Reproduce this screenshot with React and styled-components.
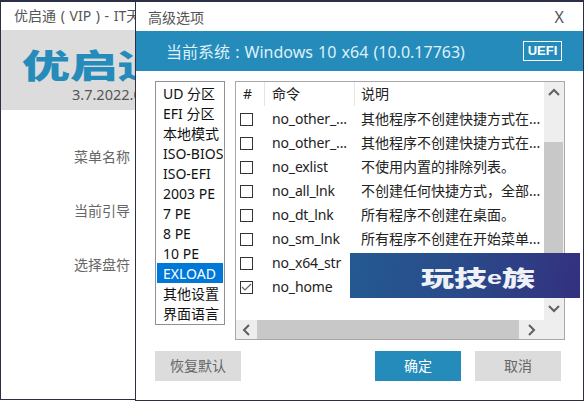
import React from 'react';
import styled, { createGlobalStyle } from 'styled-components';

const GlobalStyle = createGlobalStyle`
	html, body {
		margin: 0;
		padding: 0;
		background: #fff;
	}
	body {
		font-family: "Noto Sans", "Noto Sans CJK SC", sans-serif;
	}
`;

const Desktop = styled.div`
	position: relative;
	width: 585px;
	height: 401px;
	overflow: hidden;
`;

const MainWindow = styled.div`
	box-sizing: border-box;
	width: 136px;
	height: 400px;
	background: #fff;
	border: 1px solid #2b3046;
	border-top-width: 2px;
	display: flex;
	flex-direction: column;
	overflow: hidden;
`;

const MainTitle = styled.div`
	height: 28px;
	padding-left: 13px;
	font-size: 14px;
	line-height: 28px;
	word-spacing: 1px;
	color: #555;
	white-space: nowrap;
`;

const Banner = styled.div`
	height: 80px;
	background: #dcdcdc;
	padding-left: 21px;
	display: flex;
	flex-direction: column;
`;

const Logo = styled.div`
	height: 46px;
	margin-top: 11px;
	font-family: "Noto Sans CJK SC", sans-serif;
	font-size: 33px;
	font-weight: 900;
	line-height: 46px;
	color: #248bbb;
	white-space: nowrap;
	transform: scaleX(1.45);
	transform-origin: left center;
`;

const Version = styled.div`
	margin-left: 50px;
	margin-top: -3px;
	font-size: 14.5px;
	line-height: 20px;
	color: #555;
	white-space: nowrap;
`;

const FieldList = styled.div`
	display: flex;
	flex-direction: column;
	gap: 34px;
	padding: 37px 0 0 73px;
`;

const FieldLabel = styled.div`
	font-size: 14px;
	line-height: 20px;
	color: #666;
	white-space: nowrap;
`;

const Dialog = styled.div`
	position: absolute;
	left: 135px;
	top: 0;
	box-sizing: border-box;
	width: 449px;
	height: 401px;
	background: #fff;
	border: 1px solid #2b3046;
	border-top-width: 2px;
	display: flex;
	flex-direction: column;
`;

const DialogTitle = styled.div`
	height: 29px;
	padding: 0 19px 0 12px;
	display: flex;
	align-items: center;
	justify-content: space-between;
	font-size: 14px;
	color: #555;
`;

const CloseMark = styled.span`
	font-size: 16px;
	color: #555;
`;

const SystemBar = styled.div`
	height: 40px;
	background: #248bbb;
	padding: 0 21px 0 30px;
	display: flex;
	align-items: center;
	justify-content: space-between;
	font-size: 16px;
	word-spacing: 1px;
	color: #dff0f8;
`;

const UefiBadge = styled.div`
	box-sizing: border-box;
	width: 39px;
	height: 20px;
	border: 1px solid #fff;
	font-family: "Liberation Sans", sans-serif;
	font-size: 13px;
	font-weight: 700;
	line-height: 18px;
	text-align: center;
	color: #fff;
`;

const DialogBody = styled.div`
	display: flex;
	align-items: flex-start;
	gap: 10px;
	padding: 10px 0 0 19px;
`;

const CategoryList = styled.div`
	box-sizing: border-box;
	width: 70px;
	height: 244px;
	padding: 1px;
	border: 1px solid #8d929a;
	display: flex;
	flex-direction: column;
`;

const CategoryItem = styled.div`
	height: 20px;
	padding-left: 6px;
	font-size: 14px;
	line-height: 21px;
	white-space: nowrap;
	overflow: hidden;
	background: ${props => props.selected ? '#0078d7' : 'transparent'};
	color: ${props => props.selected ? '#fff' : '#111'};
`;

const TablePanel = styled.div`
	position: relative;
	box-sizing: border-box;
	width: 330px;
	height: 259px;
	border: 1px solid #a8a8a8;
	display: grid;
	grid-template-columns: 1fr 20px;
	grid-template-rows: 1fr 19px;
`;

const TableContent = styled.div`
	display: flex;
	flex-direction: column;
	overflow: hidden;
`;

const HeaderRow = styled.div`
	height: 24px;
	display: grid;
	grid-template-columns: 29px 90px 1fr;
	font-size: 14px;
	line-height: 24px;
	color: #222;
`;

const HeaderCell = styled.div`
	padding-left: ${props => props.$pad}px;
	height: 24px;
	border-right: ${props => props.$last ? 'none' : '1px solid #e4e4e4'};
`;

const Row = styled.div`
	height: 24px;
	display: grid;
	grid-template-columns: 29px 90px 1fr;
	align-items: center;
	font-size: 14px;
	line-height: 26px;
	color: #222;
	white-space: nowrap;
`;

const CheckCell = styled.div`
	padding-left: 4px;
	display: flex;
`;

const Box = styled.div`
	box-sizing: border-box;
	width: 13px;
	height: 13px;
	border: 1px solid #333;
	display: flex;
	align-items: center;
	justify-content: center;
`;

const CommandCell = styled.div`
	padding-left: 7px;
	letter-spacing: -0.15px;
`;

const NoteCell = styled.div`
	padding-left: 6px;
`;

const VerticalBar = styled.div`
	background: #eee;
	display: flex;
	flex-direction: column;
	align-items: flex-start;
`;

const HorizontalBar = styled.div`
	grid-column: 1 / 3;
	background: #eee;
	display: flex;
	align-items: stretch;
`;

const ArrowButton = styled.div`
	width: ${props => props.$w || 20}px;
	height: ${props => props.$h || 19}px;
	margin-top: ${props => props.$pushed ? 'auto' : '0'};
	flex-shrink: 0;
	display: flex;
	align-items: center;
	justify-content: center;
`;

const ThumbVertical = styled.div`
	width: 19px;
	height: 130px;
	margin-top: 38px;
	background: #c8c8c8;
`;

const ThumbHorizontal = styled.div`
	width: 262px;
	background: #c8c8c8;
`;

const FooterRow = styled.div`
	display: flex;
	padding: 11px 0 0 19px;
	align-items: center;
`;

const ActionButton = styled.div`
	width: 86px;
	height: 30px;
	margin-left: ${props => props.$gap || 0}px;
	font-size: 14px;
	line-height: 30px;
	text-align: center;
	background: ${props => props.primary ? '#248bbb' : '#dcdcdc'};
	color: ${props => props.primary ? '#fff' : '#666'};
`;

const Watermark = styled.div`
	position: absolute;
	left: 350px;
	top: 253px;
	width: 230px;
	height: 45px;
	background: linear-gradient(100deg, #245a91 0%, #2a4c8a 45%, #33307f 100%);
	display: flex;
	align-items: center;
	justify-content: flex-end;
	padding-right: 45px;
	box-sizing: border-box;
`;

const WatermarkText = styled.div`
	display: flex;
	align-items: center;
	font-family: "Noto Sans CJK SC", sans-serif;
	font-size: 22px;
	font-weight: 900;
	line-height: 30px;
	color: #eef2f8;
	transform: scaleX(1.5);
	transform-origin: right center;
`;

const WatermarkE = styled.span`
	font-family: "Liberation Sans", sans-serif;
	font-size: 18px;
	line-height: 30px;
	margin-top: 4px;
`;

const categories = ['UD 分区', 'EFI 分区', '本地模式', 'ISO-BIOS', 'ISO-EFI', '2003 PE', '7 PE', '8 PE', '10 PE', 'EXLOAD', '其他设置', '界面语言'];

const options = [
	{ cmd: 'no_other_...', note: '其他程序不创建快捷方式在...' },
	{ cmd: 'no_other_...', note: '其他程序不创建快捷方式在...' },
	{ cmd: 'no_exlist', note: '不使用内置的排除列表。' },
	{ cmd: 'no_all_lnk', note: '不创建任何快捷方式，全部...' },
	{ cmd: 'no_dt_lnk', note: '所有程序不创建在桌面。' },
	{ cmd: 'no_sm_lnk', note: '所有程序不创建在开始菜单...' },
	{ cmd: 'no_x64_str', note: '' },
	{ cmd: 'no_home', note: '', checked: true },
];

const Chevron = ({ dir }) => {
	const points = {
		up: '1,8 6,3 11,8',
		down: '1,3 6,8 11,3',
		left: '8,1 3,6 8,11',
		right: '3,1 8,6 3,11',
	};
	return (
		<svg width="12" height="12" viewBox="0 0 12 12">
			<polyline points={points[dir]} fill="none" stroke="#5f5f5f" strokeWidth="2" />
		</svg>
	);
};

const App = () => {
	return (
		<Desktop>
			<GlobalStyle />
			<MainWindow>
				<MainTitle>优启通 ( VIP ) - IT天空</MainTitle>
				<Banner>
					<Logo>优启通</Logo>
					<Version>3.7.2022.0</Version>
				</Banner>
				<FieldList>
					<FieldLabel>菜单名称</FieldLabel>
					<FieldLabel>当前引导</FieldLabel>
					<FieldLabel>选择盘符</FieldLabel>
				</FieldList>
			</MainWindow>

			<Dialog>
				<DialogTitle>
					<span>高级选项</span>
					<CloseMark>X</CloseMark>
				</DialogTitle>
				<SystemBar>
					<span>当前系统 : Windows 10 x64 (10.0.17763)</span>
					<UefiBadge>UEFI</UefiBadge>
				</SystemBar>
				<DialogBody>
					<CategoryList>
						{categories.map(name => (
							<CategoryItem key={name} selected={name === 'EXLOAD'}>{name}</CategoryItem>
						))}
					</CategoryList>
					<TablePanel>
						<TableContent>
							<HeaderRow>
								<HeaderCell $pad={7}>#</HeaderCell>
								<HeaderCell $pad={7}>命令</HeaderCell>
								<HeaderCell $pad={6} $last>说明</HeaderCell>
							</HeaderRow>
							{options.map((opt, i) => (
								<Row key={i}>
									<CheckCell>
										<Box>
											{opt.checked && (
												<svg width="11" height="11" viewBox="0 0 11 11">
													<polyline points="1,5 4,8 10,2" fill="none" stroke="#666" strokeWidth="1.2" />
												</svg>
											)}
										</Box>
									</CheckCell>
									<CommandCell>{opt.cmd}</CommandCell>
									<NoteCell>{opt.note}</NoteCell>
								</Row>
							))}
						</TableContent>
						<VerticalBar>
							<ArrowButton $h={22}><Chevron dir="up" /></ArrowButton>
							<ThumbVertical />
							<ArrowButton $h={22} $pushed><Chevron dir="down" /></ArrowButton>
						</VerticalBar>
						<HorizontalBar>
							<ArrowButton $w={21}><Chevron dir="left" /></ArrowButton>
							<ThumbHorizontal />
							<ArrowButton $w={25}><Chevron dir="right" /></ArrowButton>
						</HorizontalBar>
					</TablePanel>
				</DialogBody>
				<FooterRow>
					<ActionButton>恢复默认</ActionButton>
					<ActionButton primary $gap={134}>确定</ActionButton>
					<ActionButton $gap={14}>取消</ActionButton>
				</FooterRow>
			</Dialog>

			<Watermark>
				<WatermarkText>玩技<WatermarkE>e</WatermarkE>族</WatermarkText>
			</Watermark>
		</Desktop>
	);
};

export default App;
